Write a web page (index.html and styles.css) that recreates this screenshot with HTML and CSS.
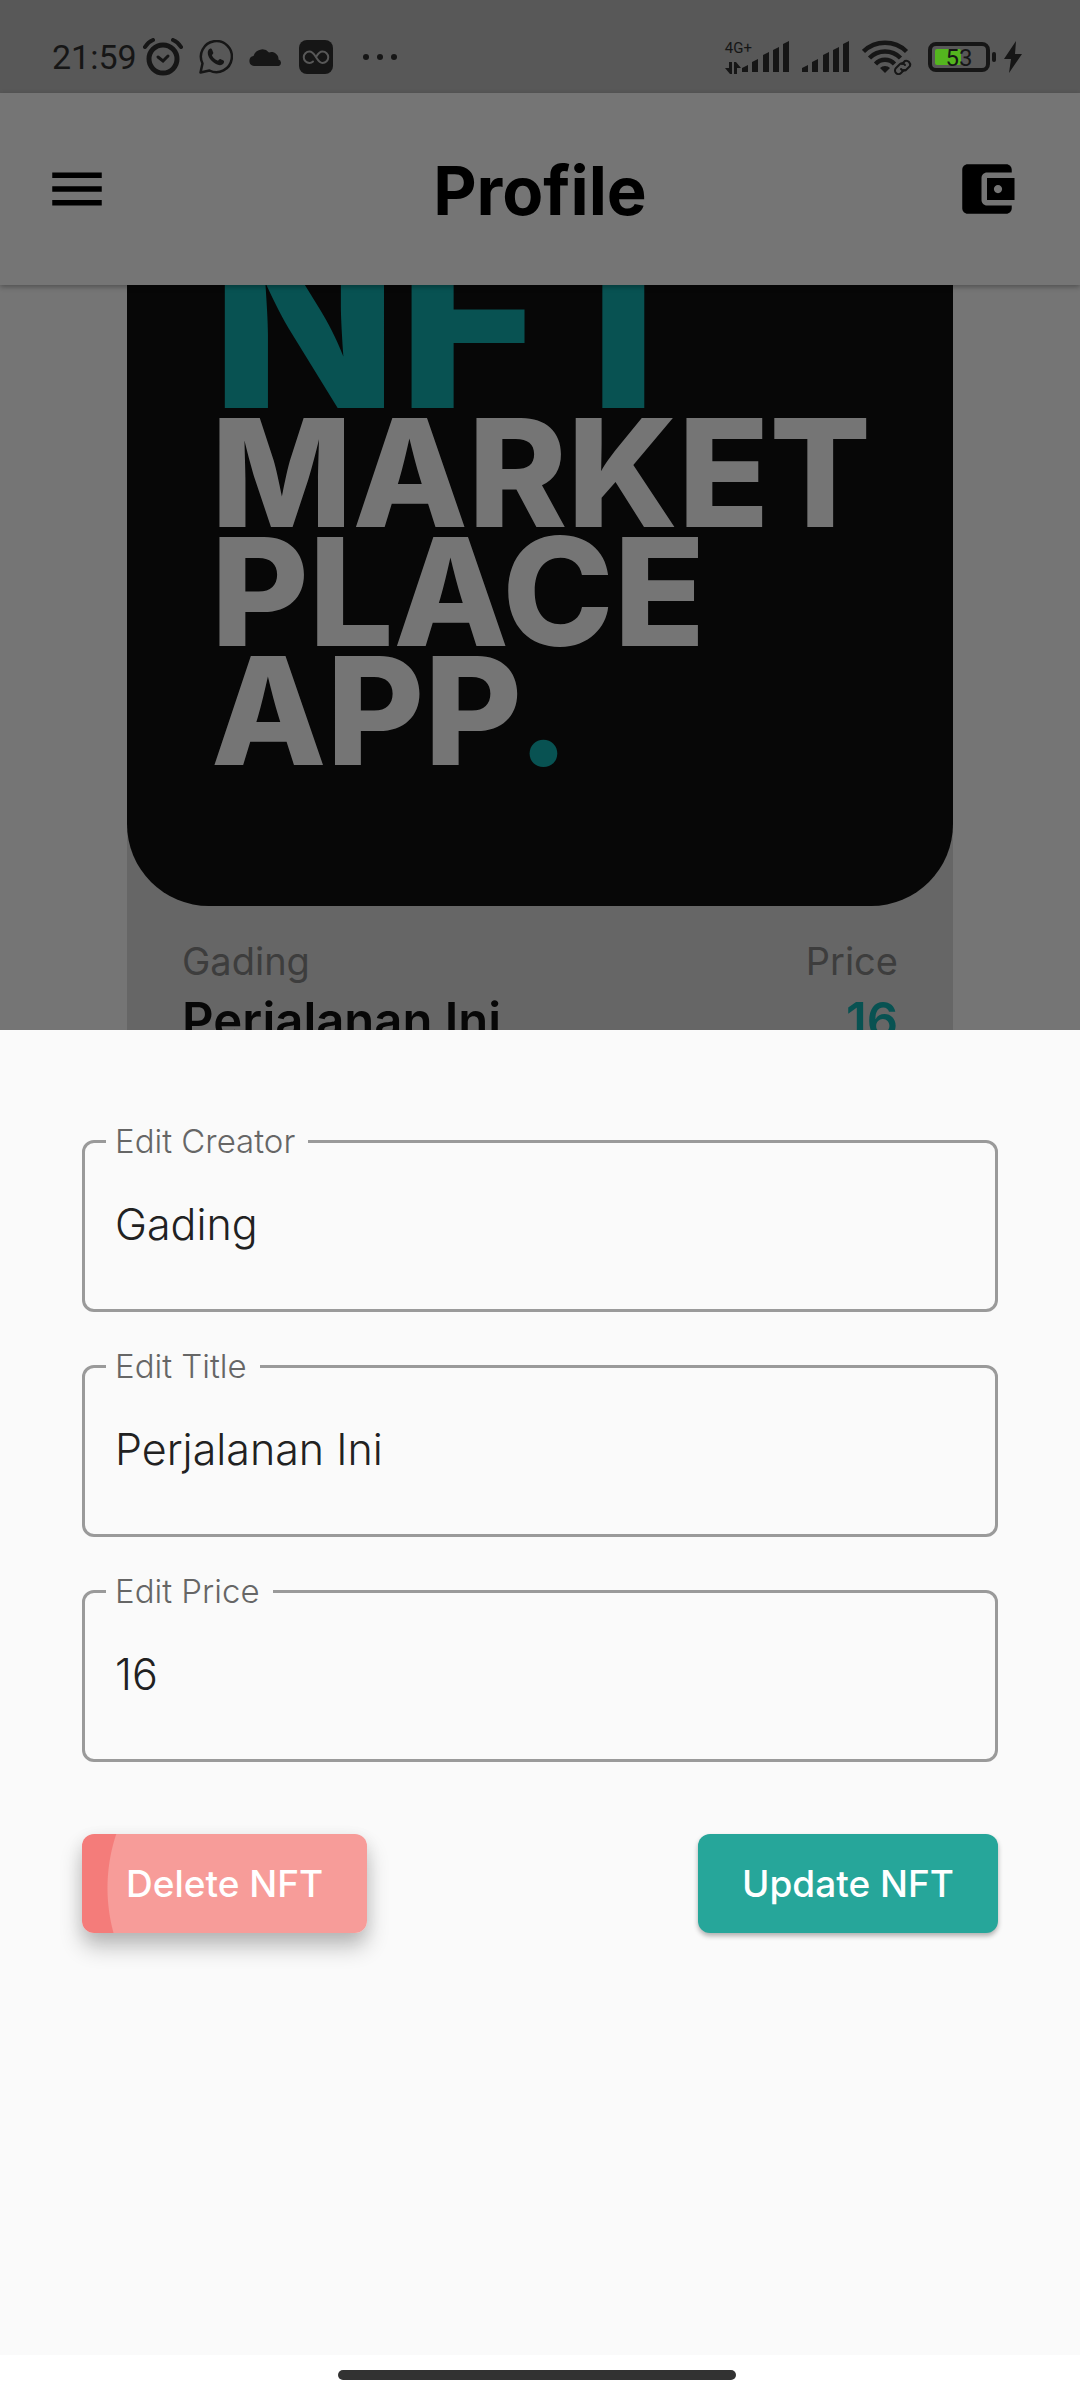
FILE: index.html
```html
<!DOCTYPE html>
<html lang="en">
<head>
<meta charset="utf-8">
<meta name="viewport" content="width=device-width, initial-scale=1">
<title>Profile</title>
<link rel="stylesheet" href="styles.css">
</head>
<body>
<div class="screen">
  <div class="status">
    <div class="status-group status-left">
      <span class="clock">21:59</span>
      <svg class="alarm" width="40" height="38" viewBox="0 0 40 38" fill="none" stroke="#161616" stroke-linecap="round"><circle cx="20" cy="21" r="14" stroke-width="5"/><path d="M2 9q3-5 8-7M38 9q-3-5-8-7" stroke-width="4"/><path d="M15 19l5 4 5-5" stroke-width="3"/></svg>
      <svg width="34" height="34" viewBox="0 0 34 34"><path d="M1.500 32.500l2-9A15.500 15.500 0 1 1 10.500 30.500z" fill="none" stroke="#161616" stroke-width="2.500" stroke-linejoin="round"/><path d="M9.500 10c1-1.500 3-2 3.500-.5l1.300 3.300c.3.900-1.500 2-1.300 2.600 1.200 2.400 3 4 5.600 5.200.8.300 1.800-2 2.700-1.600l3.200 1.600c1.200.7.400 3.200-1.200 4-3 1.500-7-.3-10.200-3.300S7.500 13.500 9.500 10z" fill="#161616"/></svg>
      <svg width="34" height="18" viewBox="0 0 34 18" fill="#161616"><path d="M5 18a5 5 0 0 1-.5-9.900A9 9 0 0 1 20 4.500a7 7 0 0 1 9.500 7A3.500 3.500 0 0 1 30 18z"/></svg>
      <svg width="34" height="34" viewBox="0 0 34 34"><rect width="34" height="34" rx="8" fill="#161616"/><path d="M14 21.500c-1 1-2 1.500-3.500 1.500a5.500 5.500 0 1 1 0-11.500c3 0 4.500 2.500 6.500 5.700s3.500 5.800 6.500 5.800a5.500 5.500 0 1 0 0-11.500c-3.500 0-5 3-6.500 5.700" fill="none" stroke="#585858" stroke-width="2" stroke-linecap="round"/></svg>
      <svg class="more" width="34" height="6" viewBox="0 0 34 6" fill="#161616"><circle cx="3" cy="3" r="3"/><circle cx="17" cy="3" r="3"/><circle cx="31" cy="3" r="3"/></svg>
    </div>
    <div class="status-group status-right">
      <div class="network">
        <span class="network-type">4G+</span>
        <svg width="16" height="12" viewBox="0 0 16 12" fill="#161616"><path d="M4 0h3v12H5L0 6h4zM9 0h2l5 6h-4v6H9z"/></svg>
      </div>
      <svg width="48" height="32" viewBox="0 0 48 32" fill="#161616"><path d="M0 31v-4l6-3v7zM10 31V21l6-3v13zM21 31V14l6-3v20zM31 31V9l6-3v25zM41 31V3l6-3v31z"/></svg>
      <svg width="48" height="32" viewBox="0 0 48 32" fill="#161616"><path d="M0 31v-4l6-3v7zM10 31V21l6-3v13zM21 31V14l6-3v20zM31 31V9l6-3v25zM41 31V3l6-3v31z"/></svg>
      <svg width="50" height="36" viewBox="0 0 50 36" fill="none" stroke="#161616" stroke-width="4.500"><path d="M1.500 12.500a31 31 0 0 1 43 0M7.500 19a22 22 0 0 1 31 0M13.500 25a13 13 0 0 1 19 0"/><path d="M23 34l-5-5a7 7 0 0 1 10 0z" fill="#161616" stroke="none"/><path d="M36 33l10-9" stroke="#585858" stroke-width="10" stroke-linecap="round"/><g stroke-width="2" stroke-linecap="round"><path d="M40 25l3-3a4 4 0 0 1 5 5l-4 4a4 4 0 0 1-5-1"/><path d="M42 31l-3 3a3.500 3.500 0 0 1-5-5l4-4a3.500 3.500 0 0 1 5 1"/></g></svg>
      <div class="battery">
        <svg width="68" height="30" viewBox="0 0 68 30"><rect x="2" y="2" width="58" height="26" rx="6" fill="none" stroke="#161616" stroke-width="4"/><rect x="7" y="7" width="26" height="16" rx="2" fill="#54b51f"/><rect x="64" y="10" width="4" height="10" rx="2" fill="#161616"/></svg>
        <span class="battery-level">53</span>
      </div>
      <svg width="18" height="32" viewBox="0 0 18 32" fill="#161616"><path d="M12 0L0 18h7L5 32l13-19h-7z"/></svg>
    </div>
  </div>

  <header class="appbar">
    <button class="icon-button" type="button" aria-label="Menu"><svg width="66" height="66" viewBox="0 0 24 24"><path d="M3 18h18v-2H3v2zm0-5h18v-2H3v2zm0-7v2h18V6H3z"/></svg></button>
    <h1 class="appbar-title">Profile</h1>
    <button class="icon-button icon-button-end" type="button" aria-label="Wallet"><svg width="66" height="66" viewBox="0 0 24 24"><path d="M21 18v1c0 1.100-.9 2-2 2H5c-1.110 0-2-.9-2-2V5c0-1.100.89-2 2-2h14c1.100 0 2 .9 2 2v1h-9c-1.110 0-2 .9-2 2v8c0 1.100.89 2 2 2h9zm-9-2h10V8H12v8zm4-2.500c-.83 0-1.500-.67-1.500-1.500s.67-1.500 1.500-1.500 1.500.67 1.500 1.500-.67 1.500-1.500 1.500z"/></svg></button>
  </header>

  <main class="feed">
    <article class="card">
      <div class="artwork">
        <div class="artwork-lead">NFT</div>
        <div>MARKET</div>
        <div>PLACE</div>
        <div>APP<span class="artwork-dot">.</span></div>
      </div>
      <div class="card-info">
        <div class="card-row card-caption"><span>Gading</span><span>Price</span></div>
        <div class="card-row card-main"><span>Perjalanan Ini</span><span class="card-price">16</span></div>
      </div>
    </article>
  </main>

  <form class="sheet">
    <fieldset class="field">
      <legend><label for="creator">Edit Creator</label></legend>
      <input id="creator" type="text" value="Gading">
    </fieldset>
    <fieldset class="field">
      <legend><label for="title">Edit Title</label></legend>
      <input id="title" type="text" value="Perjalanan Ini">
    </fieldset>
    <fieldset class="field">
      <legend><label for="price">Edit Price</label></legend>
      <input id="price" type="text" inputmode="numeric" value="16">
    </fieldset>
    <div class="actions">
      <button class="button button-delete" type="button">Delete NFT</button>
      <button class="button button-update" type="button">Update NFT</button>
    </div>
  </form>

  <div class="navbar"><div class="navbar-handle"></div></div>
</div>
</body>
</html>
```
FILE: styles.css
```css
* { box-sizing: border-box; }

body {
  margin: 0;
  background: #757575;
  font-family: Inter, "Liberation Sans", sans-serif;
}

.screen {
  display: flex;
  flex-direction: column;
  min-height: 100vh;
}

.status {
  display: flex;
  justify-content: space-between;
  height: 93px;
  padding: 20px 58px 0 52px;
  background: #585858;
  color: #161616;
  font-family: Roboto, sans-serif;
}

.status-group {
  display: flex;
  align-items: center;
}

.status-left { gap: 16px; }
.clock { font-size: 34px; line-height: 40px; }
.alarm { margin-left: -10px; }
.more { margin-left: 14px; }

.status-right { gap: 12px; }
.network {
  display: flex;
  flex-direction: column;
  gap: 6px;
  margin-right: -22px;
}
.network-type { font-size: 15px; line-height: 16px; }
.battery { position: relative; display: flex; margin: 0 -4px 0 4px; }
.battery-level {
  position: absolute;
  inset: 0 6px 0 0;
  font-size: 24px;
  line-height: 32px;
  text-align: center;
}

.appbar {
  position: relative;
  display: grid;
  grid-template-columns: 1fr auto 1fr;
  align-items: center;
  height: 192px;
  padding: 0 44px;
  background: #757575;
  box-shadow: 0 2px 5px rgba(0, 0, 0, 0.3);
}

.appbar-title {
  margin: 0;
  padding-top: 4px;
  font-size: 67px;
  font-weight: 700;
  line-height: 80px;
}

.icon-button {
  display: flex;
  justify-self: start;
  padding: 0;
  border: 0;
  background: none;
}

.icon-button-end {
  justify-self: end;
  margin-right: 16px;
}

.feed {
  height: 745px;
  overflow: hidden;
  padding: 0 127px;
}

.card {
  margin-top: -158px;
  border-radius: 82px;
  background: #666;
}

.artwork {
  padding: 100px 0 136px 84px;
  border-radius: 82px;
  background: #070707;
  color: #757575;
  font-size: 150px;
  font-weight: 800;
  line-height: 119px;
}

.artwork-lead {
  color: #085252;
  font-size: 244px;
  line-height: 186px;
}

.artwork-dot { color: #085252; }

.card-info { padding: 30px 55px 82px; }

.card-row {
  display: flex;
  justify-content: space-between;
}

.card-caption {
  color: #3d3d3d;
  font-size: 38px;
  line-height: 50px;
}

.card-main {
  color: #070707;
  font-size: 49px;
  font-weight: 600;
  line-height: 70px;
}

.card-price { color: #085252; }

.sheet {
  display: flex;
  flex: 1;
  flex-direction: column;
  gap: 36px;
  padding: 93px 82px 40px;
  background: #fafafa;
}

.field {
  min-width: 0;
  margin: 0;
  padding: 0 32px 0 21px;
  border: 3px solid #9a9a9a;
  border-radius: 12px;
}

.field legend {
  padding: 0 13px 0 9px;
  color: #666;
  font-size: 33px;
  font-weight: 300;
  line-height: 36px;
}

.field input {
  display: block;
  width: 100%;
  height: 150px;
  padding: 0 9px 20px;
  border: 0;
  outline: 0;
  background: none;
  color: #212121;
  font: 300 43px Inter, "Liberation Sans", sans-serif;
}

.actions {
  display: flex;
  justify-content: space-between;
  padding-top: 36px;
}

.button {
  height: 99px;
  padding: 0 44px;
  border: 0;
  border-radius: 12px;
  color: #fff;
  font: 500 37px Inter, "Liberation Sans", sans-serif;
}

.button-delete {
  background: radial-gradient(circle at 196px 54px, #f79c99 170px, #f47c7a 171px);
  box-shadow: 0 14px 22px rgba(0, 0, 0, 0.24), 0 4px 16px rgba(0, 0, 0, 0.08);
}

.button-update {
  background: #26a69a;
  box-shadow: 0 3px 5px rgba(0, 0, 0, 0.3);
}

.navbar {
  display: flex;
  justify-content: center;
  height: 45px;
  padding: 15px 6px 0 0;
  background: #fff;
}

.navbar-handle {
  width: 37%;
  height: 10px;
  border-radius: 5px;
  background: #323232;
}
```
